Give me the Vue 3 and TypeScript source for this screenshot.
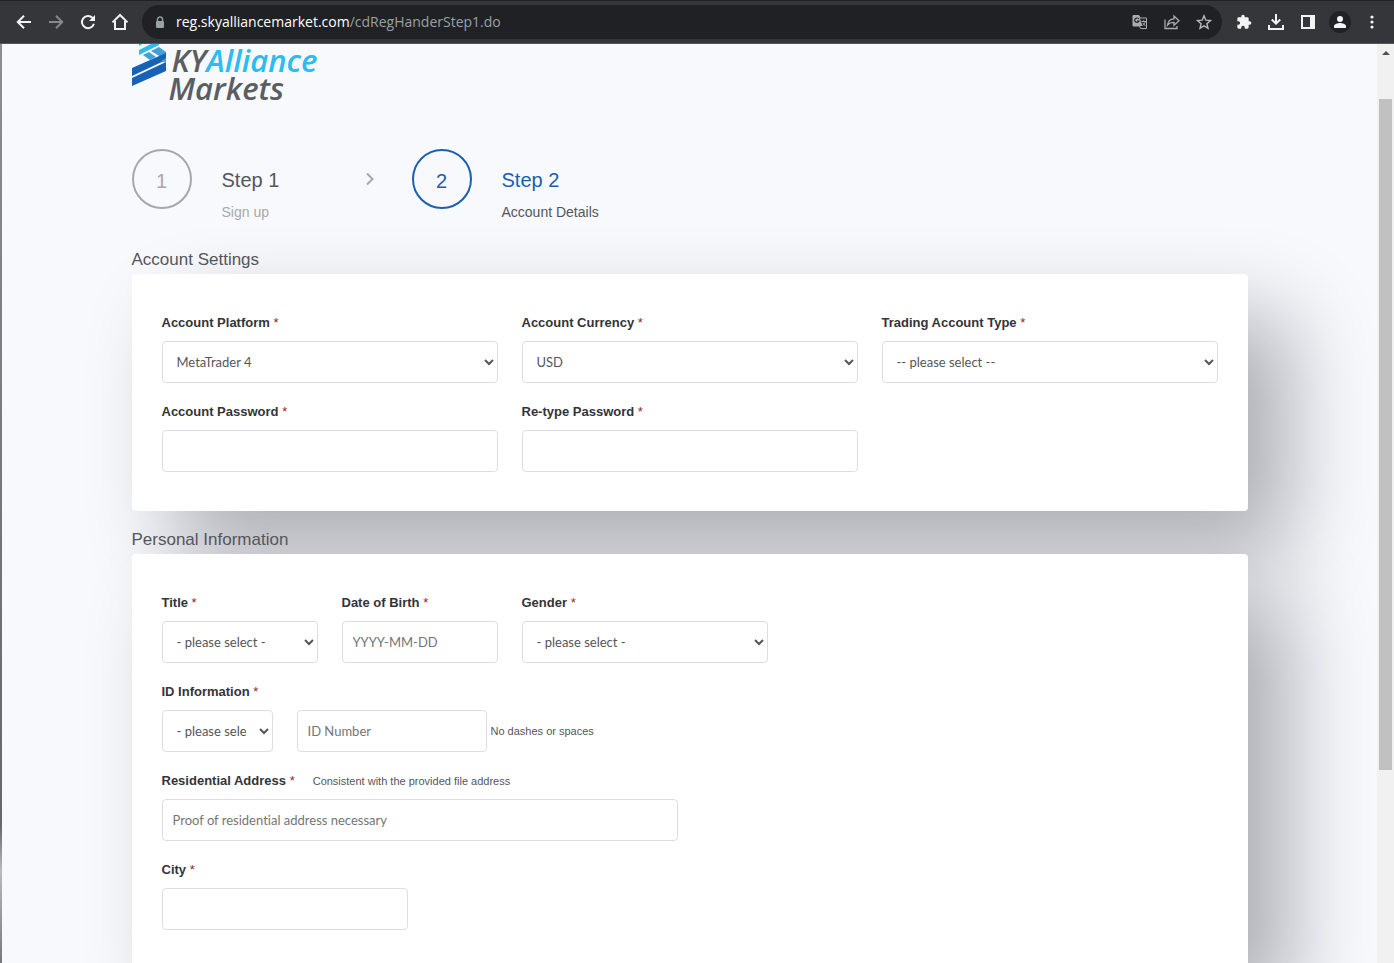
<script setup lang="ts">
interface Field {
  id: string
  label: string
  span: 'third' | 'sixth' | 'quarter'
  kind: 'select' | 'text' | 'password'
  value?: string
  placeholder?: string
}

const accountFields: Field[] = [
  { id: 'platform', label: 'Account Platform', span: 'third', kind: 'select', value: 'MetaTrader 4' },
  { id: 'currency', label: 'Account Currency', span: 'third', kind: 'select', value: 'USD' },
  { id: 'account-type', label: 'Trading Account Type', span: 'third', kind: 'select', value: '-- please select --' },
  { id: 'password', label: 'Account Password', span: 'third', kind: 'password' },
  { id: 'password-again', label: 'Re-type Password', span: 'third', kind: 'password' },
]

const personFields: Field[] = [
  { id: 'title', label: 'Title', span: 'sixth', kind: 'select', value: '- please select -' },
  { id: 'birth', label: 'Date of Birth', span: 'sixth', kind: 'text', placeholder: 'YYYY-MM-DD' },
  { id: 'gender', label: 'Gender', span: 'quarter', kind: 'select', value: '- please select -' },
]
</script>

<template>
  <div class="window">
    <header class="toolbar">
      <nav class="nav">
        <button type="button" aria-label="Back">
          <svg width="16" height="16" viewBox="0 0 16 16"><path d="M15 8H2M8 1.8 1.8 8 8 14.2" fill="none" stroke="#f1f3f4" stroke-width="2" /></svg>
        </button>
        <button type="button" aria-label="Forward">
          <svg width="16" height="16" viewBox="0 0 16 16"><path d="M1 8h13M8 1.8 14.2 8 8 14.2" fill="none" stroke="#87888b" stroke-width="2" /></svg>
        </button>
        <button type="button" aria-label="Reload">
          <svg width="16" height="16" viewBox="0 0 16 16"><path d="M13.9 9.8A6.1 6.1 0 1 1 12.6 4" fill="none" stroke="#f1f3f4" stroke-width="2" /><path d="M15 1v6H9z" fill="#f1f3f4" /></svg>
        </button>
        <button type="button" aria-label="Home">
          <svg width="18" height="18" viewBox="0 0 18 18"><path d="M1.5 9.4 9 2l7.500 7.400M4 8v8h10V8" fill="none" stroke="#f1f3f4" stroke-width="2" /></svg>
        </button>
      </nav>
      <div class="omnibox">
        <svg width="10" height="13" viewBox="0 0 10 13"><path d="M2.500 5V3.400a2.500 2.500 0 0 1 5 0V5" fill="none" stroke="#9aa0a6" stroke-width="1.400" /><rect x="1" y="5" width="8" height="7" rx="1" fill="#9aa0a6" /></svg>
        <p class="url"><span>reg.skyalliancemarket.com</span>/cdRegHanderStep1.do</p>
        <button type="button" aria-label="Translate this page">
          <svg width="16" height="16" viewBox="0 0 16 16"><path d="M1 1.500h6l1 2.500h6.500v10.500H8.500L7.500 12H1z" fill="none" stroke="#a8abb0" /><path d="M1 1.500h6L10.500 12H1z" fill="#a8abb0" /><path d="M6.800 5A2.200 2.200 0 1 0 7 7H5" fill="none" stroke="#202124" stroke-width="1.200" /><path d="M9.500 7.500H14M11.700 6.200v1.300M13.200 7.500c-.4 2-1.500 3-2.700 4M10.800 9l2.700 3" fill="none" stroke="#a8abb0" /></svg>
        </button>
        <button type="button" aria-label="Share this page">
          <svg width="16" height="16" viewBox="0 0 16 16"><path d="M1 5.500v9h12v-2.500" fill="none" stroke="#a8abb0" stroke-width="1.300" /><path d="M3.500 11c.5-4 3-6 6.500-6.200V2l5 4.700-5 4.500V8.300C7 8.300 5 9 3.500 11z" fill="none" stroke="#a8abb0" stroke-width="1.300" /></svg>
        </button>
        <button type="button" aria-label="Bookmark this page">
          <svg width="16" height="16" viewBox="0 0 16 16"><path d="m8 1.800 1.800 4.400 4.700.4-3.600 3.100 1.100 4.600L8 11.800l-4 2.500 1.100-4.600-3.600-3.100 4.700-.4z" fill="none" stroke="#b4b7bb" stroke-width="1.400" /></svg>
        </button>
      </div>
      <div class="tools">
        <button type="button" aria-label="Extensions">
          <svg width="16" height="16" viewBox="0 0 24 24"><path d="M20.500 11H19V7a2 2 0 0 0-2-2h-4V3.500a2.500 2.500 0 0 0-5 0V5H4a2 2 0 0 0-2 2v3.800h1.500a2.700 2.700 0 0 1 0 5.400H2V20a2 2 0 0 0 2 2h3.800v-1.500a2.700 2.700 0 0 1 5.400 0V22H17a2 2 0 0 0 2-2v-4h1.500a2.500 2.500 0 0 0 0-5z" fill="#f1f3f4" /></svg>
        </button>
        <button type="button" aria-label="Downloads">
          <svg width="16" height="16" viewBox="0 0 16 16"><path d="M8 0v9M3.800 5.500 8 9.700l4.200-4.200M1 11v4h14v-4" fill="none" stroke="#f1f3f4" stroke-width="2" /></svg>
        </button>
        <button type="button" aria-label="Side panel">
          <svg width="14" height="14" viewBox="0 0 14 14"><path d="M0 0h14v14H0zM2 2v10h7V2z" fill="#f1f3f4" fill-rule="evenodd" /></svg>
        </button>
        <button type="button" aria-label="Profile">
          <svg width="22" height="22" viewBox="0 0 22 22"><circle cx="11" cy="11" r="11" fill="#202124" /><circle cx="11" cy="8" r="3" fill="#f1f3f4" /><path d="M5 17v-2c0-2 4-3 6-3s6 1 6 3v2z" fill="#f1f3f4" /></svg>
        </button>
        <button type="button" aria-label="Browser menu">
          <svg width="4" height="14" viewBox="0 0 4 14"><g fill="#f1f3f4"><circle cx="2" cy="2" r="1.600" /><circle cx="2" cy="7" r="1.600" /><circle cx="2" cy="12" r="1.600" /></g></svg>
        </button>
      </div>
    </header>

    <div class="viewport">
      <div class="edge"></div>
      <main class="page">
        <div class="container">
          <a class="logo" href="#" aria-label="SKY Alliance Markets">
            <svg width="36" height="44" viewBox="0 0 36 44">
              <path d="M7 0h3L7 2zM7 6 19 0h8v1L7 11z" fill="#2cbcf0" />
              <path d="m11 11 6-3 7 5-6 3zM19 7l8-4 7 5v3l-5 2z" fill="#439fd6" />
              <path d="M0 24 34 9v7L0 32zM0 34 34 18v9L0 42z" fill="#1762b7" />
              <path d="m29 17 5-3v5z" fill="#439fd6" />
            </svg>
            <span class="wordmark"><span class="first">KY<b>Alliance</b></span><span>Markets</span></span>
          </a>

          <ol class="steps">
            <li class="step">
              <span class="disc">1</span>
              <span class="caption"><strong>Step 1</strong><small>Sign up</small></span>
              <svg class="chevron" width="10" height="14" viewBox="0 0 10 14"><path d="m2 1.500 5.500 5.500L2 12.500" fill="none" stroke="#a8a8ac" stroke-width="2" /></svg>
            </li>
            <li class="step current">
              <span class="disc">2</span>
              <span class="caption"><strong>Step 2</strong><small>Account Details</small></span>
            </li>
          </ol>

          <form>
            <h2>Account Settings</h2>
            <section class="card">
              <div v-for="f in accountFields" :key="f.id" class="field" :class="f.span">
                <label :for="f.id">{{ f.label }} <i>*</i></label>
                <select v-if="f.kind === 'select'" :id="f.id"><option>{{ f.value }}</option></select>
                <input v-else :id="f.id" :type="f.kind" />
              </div>
            </section>

            <h2>Personal Information</h2>
            <section class="card">
              <div v-for="f in personFields" :key="f.id" class="field" :class="f.span">
                <label :for="f.id">{{ f.label }} <i>*</i></label>
                <select v-if="f.kind === 'select'" :id="f.id"><option>{{ f.value }}</option></select>
                <input v-else :id="f.id" :type="f.kind" :placeholder="f.placeholder" />
              </div>
              <div class="field full">
                <label for="id-type">ID Information <i>*</i></label>
                <div class="pair">
                  <select id="id-type"><option>- please select -</option></select>
                  <div class="hinted">
                    <input id="id-number" type="text" placeholder="ID Number" aria-label="ID Number" />
                    <small>No dashes or spaces</small>
                  </div>
                </div>
              </div>
              <div class="field full">
                <div class="label-row">
                  <label for="address">Residential Address <i>*</i></label>
                  <small>Consistent with the provided file address</small>
                </div>
                <input id="address" class="half" type="text" placeholder="Proof of residential address necessary" />
              </div>
              <div class="field quarter">
                <label for="city">City <i>*</i></label>
                <input id="city" type="text" />
              </div>
            </section>
          </form>
        </div>
      </main>
      <div class="scrollbar"><span class="arrow"></span><span class="thumb"></span></div>
    </div>
  </div>
</template>

<style>
body {
  margin: 0;
}
</style>

<style scoped>
.window {
  display: flex;
  flex-direction: column;
  height: 100vh;
  overflow: hidden;
  font-family: "Liberation Sans", Arial, sans-serif;
  color: #55565b;
}
button {
  display: flex;
  align-items: center;
  justify-content: center;
  width: 32px;
  height: 32px;
  padding: 0;
  border: 0;
  background: none;
}
.toolbar {
  flex: none;
  box-sizing: border-box;
  display: flex;
  align-items: center;
  height: 44px;
  padding: 0 6px 0 8px;
  background: #35363a;
  border-top: 1px solid #202124;
  border-bottom: 1px solid #55555a;
}
.nav,
.tools {
  display: flex;
}
.nav {
  margin-right: 6px;
}
.tools {
  margin-left: 6px;
}
.omnibox {
  flex: 1;
  min-width: 0;
  display: flex;
  align-items: center;
  box-sizing: border-box;
  height: 34px;
  padding: 0 2px 0 13px;
  border-radius: 17px;
  background: #202124;
}
.url {
  flex: 1;
  min-width: 0;
  margin: 0 0 0 11px;
  overflow: hidden;
  white-space: nowrap;
  font: 14px/20px "Open Sans", sans-serif;
  color: #9aa0a6;
}
.url span {
  color: #fff;
}
.viewport {
  flex: 1;
  min-height: 0;
  display: flex;
}
.edge {
  flex: none;
  width: 2px;
  background: linear-gradient(#8d8e92, #66676b 85%, #b9babd 90%, #77787c);
}
.page {
  flex: 1;
  min-width: 0;
  overflow: hidden;
  background: #f7f9fd;
}
.container {
  max-width: 1116px;
  margin: 0 auto;
}
.logo {
  display: flex;
  height: 57px;
  color: #5b5d61;
  text-decoration: none;
}
.wordmark {
  display: flex;
  flex-direction: column;
  margin-left: 1px;
  font: italic 600 31px/28px "Open Sans", sans-serif;
}
.wordmark b {
  font-weight: 600;
  color: #2cbcf0;
}
.first {
  margin-top: 2px;
  padding-left: 3px;
}
.steps {
  display: flex;
  margin: 48px 0 0;
  padding: 0;
  list-style: none;
}
.step {
  display: flex;
  width: 280px;
  color: #a8a8ac;
}
.disc {
  box-sizing: border-box;
  flex: none;
  width: 60px;
  height: 60px;
  border: 2px solid;
  border-radius: 50%;
  font-size: 20px;
  line-height: 60px;
  text-align: center;
}
.caption {
  flex: 1;
  display: flex;
  flex-direction: column;
  margin: 20px 0 0 30px;
}
.caption strong {
  font-size: 20px;
  font-weight: 400;
  line-height: 23px;
  color: #55565b;
}
.caption small {
  margin-top: 11px;
  font-size: 14px;
  line-height: 18px;
}
.chevron {
  margin: 23px 37px 0 0;
}
.current,
.current strong {
  color: #1b5faf;
}
.current small {
  color: #55565b;
}
h2 {
  margin: 0;
  height: 43px;
  box-sizing: border-box;
  padding-top: 19px;
  font-size: 17px;
  font-weight: 400;
  line-height: 20px;
}
form {
  padding-top: 10px;
}
.card {
  display: grid;
  grid-template-columns: repeat(24, minmax(0, 1fr));
  gap: 20px 24px;
  padding: 40px 30px 39px;
  border-radius: 4px;
  background: #fff;
  box-shadow: 42px 42px 86px rgba(0, 4, 16, 0.3);
}
.field {
  min-width: 0;
}
.third {
  grid-column: span 8;
}
.sixth {
  grid-column: span 4;
}
.quarter {
  grid-column: span 6;
}
.full {
  grid-column: 1 / -1;
}
label {
  display: block;
  margin-bottom: 10px;
  font-size: 13px;
  font-weight: 700;
  line-height: 17px;
  color: #333438;
}
label i {
  font-style: normal;
  font-weight: 400;
  color: #8c2a2a;
}
select,
input {
  display: block;
  box-sizing: border-box;
  width: 100%;
  height: 42px;
  padding: 0 10px;
  margin: 0;
  border: 1px solid #dddde5;
  border-radius: 4px;
  background-color: #fff;
  font: 13px Lato, sans-serif;
  font-variant-ligatures: none;
  color: #55565b;
}
input::placeholder {
  color: #757575;
}
small {
  font-size: 11px;
}
.half {
  width: calc(50% - 12px);
}
.pair {
  display: grid;
  grid-template-columns: repeat(24, minmax(0, 1fr));
  column-gap: 24px;
}
.pair select {
  grid-column: span 3;
}
.hinted {
  grid-column: span 12;
  display: flex;
  align-items: center;
  gap: 4px;
}
.hinted input {
  width: 190px;
}
.label-row {
  display: flex;
  align-items: baseline;
  gap: 18px;
}
.scrollbar {
  flex: none;
  display: flex;
  flex-direction: column;
  align-items: center;
  width: 17px;
  background: #f1f1f1;
}
.arrow {
  margin: 7px 0 44px;
  border: 4px solid transparent;
  border-top: 0;
  border-bottom-color: #505050;
}
.thumb {
  width: 13px;
  height: 73%;
  background: #c1c1c1;
}
</style>
